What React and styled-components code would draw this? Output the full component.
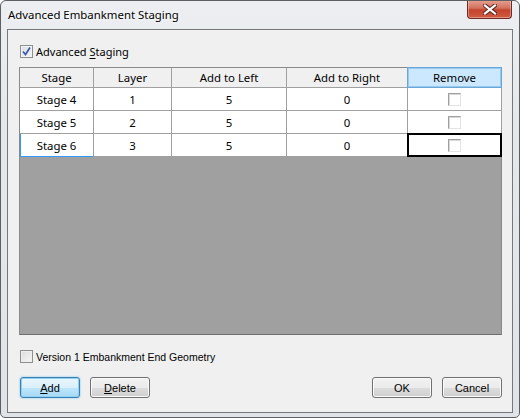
import React from 'react';
import styled, { createGlobalStyle } from 'styled-components';

const GlobalStyle = createGlobalStyle`
  html, body {
    margin: 0;
    padding: 0;
    overflow: hidden;
    background: #ffffff;
  }
  * {
    box-sizing: border-box;
  }
`;

const rows = [
  { stage: 'Stage 4', layer: 1, left: 5, right: 0 },
  { stage: 'Stage 5', layer: 2, left: 5, right: 0 },
  { stage: 'Stage 6', layer: 3, left: 5, right: 0 },
];

const columns = ['Stage', 'Layer', 'Add to Left', 'Add to Right', 'Remove'];

const App = () => {
  return (
    <>
      <GlobalStyle />
      <Window>
        <TitleBar>
          <Title>Advanced Embankment Staging</Title>
          <CloseButton>
            <svg width="14" height="11" viewBox="0 0 14 11">
              <path
                d="M2 1.5 L12 9.5 M12 1.5 L2 9.5"
                stroke="#5a2a24"
                strokeWidth="4.2"
                strokeLinecap="square"
              />
              <path
                d="M2 1.5 L12 9.5 M12 1.5 L2 9.5"
                stroke="#ffffff"
                strokeWidth="2.2"
                strokeLinecap="square"
              />
            </svg>
          </CloseButton>
        </TitleBar>

        <Client>
          <CheckRow>
            <CheckBox checked>
              <svg width="9" height="9" viewBox="0 0 9 9">
                <path
                  d="M1 4.5 L3.5 7.5 L8 0.5"
                  fill="none"
                  stroke="#3b5aa8"
                  strokeWidth="1.7"
                />
              </svg>
            </CheckBox>
            <Label>
              Advanced <u>S</u>taging
            </Label>
          </CheckRow>

          <Grid>
            <HeaderRow>
              {columns.map((c, i) => (
                <HeaderCell key={c} selected={i === 4}>
                  {c}
                </HeaderCell>
              ))}
            </HeaderRow>
            {rows.map((r, i) => {
              const last = i === rows.length - 1;
              return (
                <Row key={r.stage}>
                  <Cell focused={last}>{r.stage}</Cell>
                  <Cell>{r.layer}</Cell>
                  <Cell>{r.left}</Cell>
                  <Cell>{r.right}</Cell>
                  <Cell current={last}>
                    <CellBox />
                  </Cell>
                </Row>
              );
            })}
            <Workspace />
          </Grid>

          <OptionRow>
            <PlainBox />
            <SmallLabel>Version 1 Embankment End Geometry</SmallLabel>
          </OptionRow>

          <ButtonBar>
            <ButtonGroup>
              <Button primary>
                <u>A</u>dd
              </Button>
              <Button>
                <u>D</u>elete
              </Button>
            </ButtonGroup>
            <ButtonGroup>
              <Button>OK</Button>
              <Button>Cancel</Button>
            </ButtonGroup>
          </ButtonBar>
        </Client>
      </Window>
    </>
  );
};

const Window = styled.div`
  width: 520px;
  height: 418px;
  border: 1px solid #5c6064;
  border-radius: 6px 6px 5px 5px;
  background: linear-gradient(180deg, #eceef1 0%, #e5e8eb 30%, #e0e3e7 100%);
  display: flex;
  flex-direction: column;
  overflow: hidden;
`;

const TitleBar = styled.div`
  height: 28px;
  display: flex;
  justify-content: space-between;
  align-items: flex-start;
  padding-left: 7px;
  padding-right: 7px;
`;

const Title = styled.span`
  font-family: 'Noto Sans', 'Open Sans', sans-serif;
  font-size: 11.4px;
  color: #000;
  margin-top: 6px;
  text-shadow: 0 0 6px #ffffff, 0 0 3px #ffffff;
`;

const CloseButton = styled.div`
  width: 45px;
  height: 19px;
  margin-top: -1px;
  border: 1px solid #6b2a22;
  border-top: none;
  border-radius: 0 0 4px 4px;
  background: linear-gradient(180deg, #e8a293 0%, #d2705d 45%, #c4432c 55%, #d25b40 100%);
  box-shadow: inset 0 0 0 1px rgba(255, 255, 255, 0.35);
  display: flex;
  align-items: center;
  justify-content: center;
`;

const Client = styled.div`
  flex: 1;
  margin: 0 6px 4px 6px;
  border: 1px solid #75797e;
  background: #f0f0f0;
  padding: 15px 10px 0 11px;
  display: flex;
  flex-direction: column;
`;

const CheckRow = styled.div`
  display: flex;
  align-items: center;
  height: 13px;
  margin-left: 1px;
  margin-bottom: 9px;
`;

const CheckBox = styled.span`
  width: 13px;
  height: 13px;
  border: 1px solid #8e8f8f;
  background: linear-gradient(135deg, #dcdee3 0%, #f4f4f6 100%);
  box-shadow: inset 0 0 0 1px #f4f4f4;
  display: flex;
  align-items: center;
  justify-content: center;
  flex-shrink: 0;
`;

const Label = styled.span`
  font-family: 'Noto Sans', 'Open Sans', sans-serif;
  font-size: 11px;
  color: #000;
  margin-left: 3px;

  u {
    text-decoration-thickness: 1px;
    text-underline-offset: 2px;
  }
`;

const Grid = styled.div`
  width: 483px;
  height: 268px;
  border: 1px solid #8a8a8a;
  border-bottom-color: #6e6e6e;
  background: #a0a0a0;
  display: flex;
  flex-direction: column;
  font-family: 'Noto Sans', 'Open Sans', sans-serif;
  font-size: 11.4px;
  color: #000;
`;

const colTemplate = '74px 78px 115px 121px 94px';

const HeaderRow = styled.div`
  display: grid;
  grid-template-columns: ${colTemplate};
  height: 20px;
  background: #f0f0f0;
`;

const HeaderCell = styled.div`
  display: flex;
  align-items: center;
  justify-content: center;
  border-right: 1px solid #a0a0a0;
  border-bottom: 1px solid #a0a0a0;
  background: ${(p) => (p.selected ? '#cce8ff' : 'transparent')};
  box-shadow: ${(p) => (p.selected ? 'inset 0 0 0 1px #99c9ef' : 'none')};
  ${(p) => p.selected && 'border-color: #6aa7d9; margin-top: -1px; border-top: 1px solid #6aa7d9; border-left: 1px solid #6aa7d9; margin-left: -1px;'}
`;

const Row = styled.div`
  display: grid;
  grid-template-columns: ${colTemplate};
  height: 23px;
  background: #ffffff;
`;

const Cell = styled.div`
  position: relative;
  display: flex;
  align-items: center;
  justify-content: center;
  border-right: 1px solid #a0a0a0;
  border-bottom: 1px solid #a0a0a0;
  ${(p) => p.focused && 'border-bottom-color: #3399ff; box-shadow: inset 1px 0 0 #3399ff;'}

  &::after {
    content: '';
    display: ${(p) => (p.current ? 'block' : 'none')};
    position: absolute;
    left: -1px;
    top: -1px;
    right: -1px;
    bottom: -1px;
    border: 2px solid #000;
  }
`;

const CellBox = styled.span`
  width: 13px;
  height: 13px;
  border: 1px solid #a0a0a0;
  border-right-color: #e3e3e3;
  border-bottom-color: #e3e3e3;
  background: #ffffff;
  box-shadow: inset 1px 1px 0 #d8d8d8;
`;

const Workspace = styled.div`
  flex: 1;
  background: #a0a0a0;
`;

const OptionRow = styled.div`
  display: flex;
  align-items: center;
  height: 13px;
  margin-top: 15px;
  margin-left: 1px;
`;

const PlainBox = styled.span`
  width: 13px;
  height: 13px;
  border: 1px solid #8e8f8f;
  background: linear-gradient(135deg, #dcdcdc 0%, #f6f6f6 100%);
  box-shadow: inset 0 0 0 1px #eeeeee;
  flex-shrink: 0;
`;

const SmallLabel = styled.span`
  font-family: 'Liberation Sans', Arial, sans-serif;
  font-size: 10.5px;
  color: #000;
  margin-left: 3px;
`;

const ButtonBar = styled.div`
  display: flex;
  justify-content: space-between;
  margin-top: 14px;
  margin-left: 1px;
  width: 482px;
`;

const ButtonGroup = styled.div`
  display: flex;
  gap: 10px;
`;

const Button = styled.div`
  width: 60px;
  height: 21px;
  display: flex;
  align-items: center;
  justify-content: center;
  font-family: 'Liberation Sans', Arial, sans-serif;
  font-size: 11px;
  color: #000;
  border-radius: 3px;
  border: 1px solid ${(p) => (p.primary ? '#3c7fb1' : '#707070')};
  background: ${(p) =>
    p.primary
      ? 'linear-gradient(180deg, #eaf6fd 0%, #d9f0fc 50%, #bee6fd 51%, #a7d9f5 100%)'
      : 'linear-gradient(180deg, #f2f2f2 0%, #ebebeb 50%, #dddddd 51%, #cfcfcf 100%)'};
  box-shadow: ${(p) =>
    p.primary ? 'inset 0 0 0 1px #90d0f4, 0 0 2px #5fb8e8' : 'inset 0 0 0 1px #fbfbfb'};

  u {
    text-underline-offset: 1px;
  }
`;

export default App;
